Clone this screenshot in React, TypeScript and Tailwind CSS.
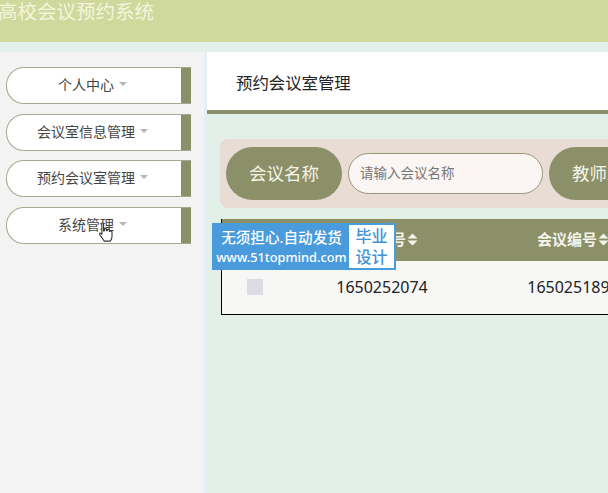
import { Fragment } from "react";

const MENUS = ["个人中心", "会议室信息管理", "预约会议室管理", "系统管理"];

// 表头排序箭头
function SortArrows() {
  return (
    <svg width="11" height="13" viewBox="0 0 11 13" className="ml-px shrink-0">
      <path d="M5.5 0.5 L10.5 5.5 H0.5 Z M0.5 7.5 H10.5 L5.5 12.5 Z" fill="#f4f4ea" />
    </svg>
  );
}

function HandCursor() {
  return (
    <svg width="18" height="23" viewBox="0 0 18 22" className="absolute left-[98px] top-[221px]">
      <path
        d="M4 1.5c1 0 1.6.7 1.6 1.7v6.300l1-.2V7.600c0-.9 1.700-.9 1.900 0v1.500l.9.1V8.300c.2-.9 1.800-.8 1.900.2v1.200l.8.2c.3-.8 1.800-.6 1.900.5v4.600c0 2-.8 3.200-1.600 4.600H6.200C5 17.700 3.700 15.600 1.800 13.300c-.8-1.300.5-2.400 1.300-1.500l.8 1V3.200C2.400 2.200 3 1.500 4 1.500Z"
        fill="#ffffff"
        stroke="#333333"
        strokeWidth="1.100"
        strokeLinejoin="round"
      />
    </svg>
  );
}

export default function App() {
  return (
    <div
      className="relative flex h-[493px] w-[608px] flex-col overflow-hidden bg-[#e3efe9]"
      style={{ fontFamily: '"Noto Sans", "Noto Sans CJK SC", sans-serif' }}
    >
      {/* Header */}
      <div className="h-[42px] shrink-0 bg-[#cfd89d]">
        <div className="-ml-[2px] whitespace-nowrap text-[19.500px] leading-[24px] text-[#f3f6dc]">
          高校会议预约系统
        </div>
      </div>

      <div className="mt-[10px] flex min-h-0 flex-1">
        {/* Sidebar */}
        <div className="flex w-[207px] shrink-0 flex-col gap-[9.500px] border-r-[3px] border-[#e6eff3] bg-[#f3f3f3] pl-[6px] pt-[15px]">
          {MENUS.map((menu) => (
            <div key={menu} className="flex h-[37px] w-[185px] overflow-hidden rounded-l-[18px] border border-r-0 border-[#a8a890] bg-white">
              <div className="flex flex-1 items-center justify-center gap-[5px] pb-[2px] pr-[3px] text-[14px] text-[#444444]">
                {menu}
                <span className="mt-[-1px] h-0 w-0 border-x-[4.500px] border-t-[4px] border-x-transparent border-t-[#b5b5b5]" />
              </div>
              <div className="w-[10px] bg-[#8c9069]" />
            </div>
          ))}
        </div>

        {/* Main */}
        <div className="min-w-0 flex-1">
          <div className="flex h-[62px] items-center border-b-[4px] border-[#8c9069] bg-white pl-[29px] pt-[4px] text-[16.400px] text-[#222222]">
            预约会议室管理
          </div>

          <div className="ml-[13px] mt-[25px] flex h-[69px] w-[500px] items-center rounded-l-[8px] bg-[#e8dcd5] pl-[6px]">
            <div className="flex h-[53px] w-[116px] shrink-0 items-center justify-center rounded-[27px] bg-[#8c9069] text-[17.500px] text-[#f5f5e6]">
              会议名称
            </div>
            <div className="ml-[6px] flex h-[41px] w-[195px] shrink-0 items-center rounded-[21px] border border-[#9a9678] bg-[#fbf6f3] pl-[11px] text-[13.500px] text-[#777777]">
              请输入会议名称
            </div>
            <div className="ml-[6px] flex h-[53px] w-[116px] shrink-0 items-center justify-center rounded-[27px] bg-[#8c9069] text-[17.500px] text-[#f5f5e6]">
              教师工号
            </div>
          </div>

          <div className="ml-[14px] mt-[11px] w-[500px] border-b border-l border-black">
            <div className="flex h-[42px] items-center bg-[#8c9069] pb-[2px] text-[15px] font-bold text-[#f4f4ea]">
              <div className="w-[66px]" />
              {["教师工号", "会议编号"].map((title, i) => (
                <Fragment key={title}>
                  <div className={`flex items-center justify-center ${i === 0 ? "w-[188px]" : "w-[194px]"}`}>
                    {title}
                    <SortArrows />
                  </div>
                </Fragment>
              ))}
            </div>
            <div className="flex h-[53px] items-center bg-[#f7f7f5] pb-[2px] text-[16px] text-[#222222]">
              <div className="flex w-[66px] justify-center">
                <div className="h-[16px] w-[16px] bg-[#dcdce4]" />
              </div>
              <div className="w-[188px] text-center">1650252074</div>
              <div className="w-[194px] text-center">1650251891</div>
            </div>
          </div>
        </div>
      </div>

      <HandCursor />

      {/* 水印 */}
      <div className="absolute left-[212px] top-[223px] flex h-[47px] w-[184px] bg-[#4a9bdc] p-[2px]">
        <div className="flex w-[135px] flex-col items-center justify-center text-white">
          <div className="whitespace-nowrap text-[14.600px] font-medium leading-[22px]">无须担心.自动发货</div>
          <div className="whitespace-nowrap text-[12.800px] font-medium leading-[19px]">www.51topmind.com</div>
        </div>
        <div className="flex flex-1 flex-col items-center justify-center bg-white text-[16px] font-medium leading-[21px] text-[#3f94d8]">
          <span>毕业</span>
          <span>设计</span>
        </div>
      </div>
    </div>
  );
}
